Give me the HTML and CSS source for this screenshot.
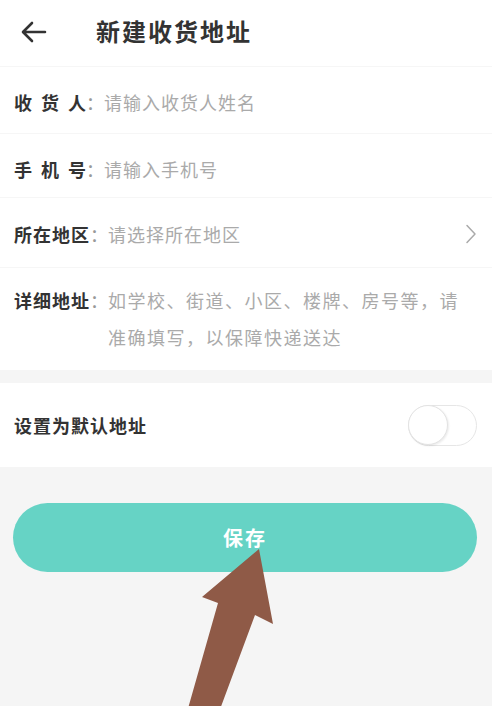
FILE: index.html
```html
<!DOCTYPE html>
<html lang="zh-CN">
<head>
    <meta charset="UTF-8">
    <meta name="viewport" content="width=device-width, initial-scale=1.0">
    <title>新建收货地址</title>
    <link rel="stylesheet" href="styles.css">
</head>
<body>
    <div class="page">
        <header class="topbar">
            <svg class="back" width="26" height="22" viewBox="0 0 26 22">
                <path d="M24 11H3M11 2L2 11l9 9" fill="none" stroke="#333" stroke-width="2.6" stroke-linecap="round" stroke-linejoin="round"/>
            </svg>
            <h1>新建收货地址</h1>
        </header>

        <form class="form">
            <div class="row row-1">
                <span class="label spread">收货人</span><span class="colon">：</span>
                <span class="hint">请输入收货人姓名</span>
            </div>
            <div class="row row-2">
                <span class="label spread">手机号</span><span class="colon">：</span>
                <span class="hint">请输入手机号</span>
            </div>
            <div class="row row-3">
                <span class="label">所在地区</span><span class="colon">：</span>
                <span class="hint">请选择所在地区</span>
                <svg class="chevron" width="12" height="20" viewBox="0 0 12 20">
                    <path d="M2 1.5l8 8.5-8 8.5" fill="none" stroke="#aaa" stroke-width="1.5" stroke-linecap="round" stroke-linejoin="round"/>
                </svg>
            </div>
            <div class="row row-detail">
                <span class="label">详细地址</span><span class="colon">：</span>
                <span class="hint multi">如学校、街道、小区、楼牌、房号等，请准确填写，以保障快递送达</span>
            </div>
        </form>

        <div class="default-row">
            <span class="label">设置为默认地址</span>
            <span class="switch"><span class="knob"></span></span>
        </div>

        <button type="button" class="save">保存</button>
    </div>

    <!-- pointer over the save button -->
    <svg class="pointer" width="492" height="706" viewBox="0 0 492 706">
        <polygon points="259,549 273,624 255,615 219,712 187,712 218,603 202,597" fill="#8f5a47"/>
    </svg>
</body>
</html>
```

FILE: styles.css
```css
* {
    box-sizing: border-box;
}
body {
    margin: 0;
    background-color: #f5f5f5;
    font-family: "Noto Sans CJK SC", "Noto Sans", sans-serif;
    color: #333;
    height: 706px;
    overflow: hidden;
}
.page {
    min-height: 706px;
}
.topbar {
    display: flex;
    align-items: center;
    height: 67px;
    padding-bottom: 3px;
    background-color: white;
    border-bottom: 1px solid #f6f6f6;
}
.back {
    margin-left: 21px;
}
.topbar h1 {
    margin: 0 0 0 49px;
    font-size: 24px;
    font-weight: bold;
    letter-spacing: 2px;
    color: #333;
    margin-top: -2px;
}
.form {
    background-color: white;
}
.row {
    display: flex;
    align-items: center;
    padding: 0 15px 0 14px;
    border-bottom: 1px solid #f6f6f6;
    font-size: 18px;
}
.row-1 {
    height: 67px;
    padding-top: 4px;
}
.row-2 {
    height: 64px;
    padding-top: 6px;
}
.row-3 {
    height: 70px;
    padding-top: 3px;
}
.row-detail {
    align-items: flex-start;
    height: 102px;
    border-bottom: none;
    padding-top: 14px;
    padding-bottom: 14px;
    line-height: 37px;
}
.label {
    font-weight: bold;
    letter-spacing: 1px;
    color: #333;
    white-space: nowrap;
}
.label.spread {
    display: inline-block;
    width: 72px;
    letter-spacing: 0;
    text-align: justify;
    text-align-last: justify;
}
.colon {
    color: #999;
    font-size: 18px;
}
.hint {
    color: #aaa;
    letter-spacing: 1px;
}
.hint.multi {
    flex: 1;
    letter-spacing: 1.5px;
    padding-right: 8px;
}
.chevron {
    margin-left: auto;
}
.default-row {
    display: flex;
    align-items: center;
    justify-content: space-between;
    height: 84px;
    margin-top: 13px;
    padding: 0 15px 0 14px;
    background-color: white;
    font-size: 18px;
}
.switch {
    position: relative;
    display: block;
    width: 69px;
    height: 41px;
    border: 1.5px solid #e6e6e6;
    border-radius: 21px;
    background-color: white;
}
.knob {
    position: absolute;
    left: -1px;
    top: -1px;
    width: 40px;
    height: 40px;
    border-radius: 50%;
    border: 1px solid #e3e3e3;
    background-color: white;
    box-shadow: 1px 1px 2px rgba(0, 0, 0, 0.08);
}
.save {
    display: block;
    width: 464px;
    height: 69px;
    margin: 36px 0 0 13px;
    border: none;
    border-radius: 35px;
    background-color: #66d3c5;
    color: white;
    font-family: inherit;
    font-size: 20px;
    font-weight: bold;
    letter-spacing: 2px;
}
.pointer {
    position: absolute;
    left: 0;
    top: 0;
    pointer-events: none;
}
```
